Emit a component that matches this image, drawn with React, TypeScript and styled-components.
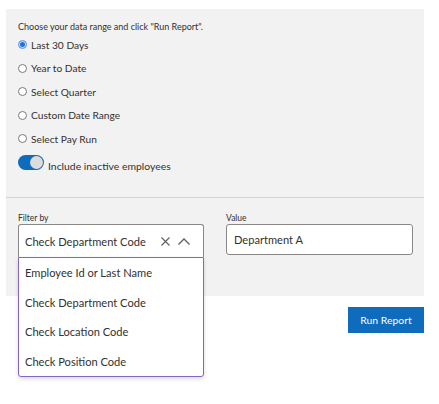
import React, { useState } from 'react';
import styled, { createGlobalStyle } from 'styled-components';

const GlobalStyle = createGlobalStyle`
  body {
    margin: 0;
    background: #ffffff;
    font-family: 'Lato', 'Liberation Sans', sans-serif;
    color: #323130;
  }
`;

const Page = styled.div`
  width: 439px;
  min-height: 404px;
  padding: 9px 15px 0 6px;
  box-sizing: border-box;
`;

const Panel = styled.div`
  background: #f2f2f2;
`;

const RangeSection = styled.div`
  padding: 12px 12px 23px;
  border-bottom: 1px solid #d4d4d4;
`;

const Hint = styled.p`
  margin: 0;
  font-size: 9px;
  line-height: 12px;
`;

const RadioRow = styled.label`
  display: flex;
  align-items: center;
  gap: 4px;
  height: 23.5px;
  font-size: 10.2px;
  cursor: pointer;
`;

const RadioDot = styled.span<{ checked: boolean }>`
  width: 9px;
  height: 9px;
  border-radius: 50%;
  box-sizing: border-box;
  border: 1px solid ${({ checked }) => (checked ? '#7aa7ea' : '#7a7a7a')};
  background: ${({ checked }) => (checked ? '#1a73e8' : '#ffffff')};
  box-shadow: ${({ checked }) => (checked ? 'inset 0 0 0 1px #cfe0fb' : 'none')};
`;

const ToggleRow = styled.div`
  display: flex;
  align-items: center;
  gap: 4px;
  height: 23.5px;
  font-size: 10.4px;
`;

const Track = styled.span<{ on: boolean }>`
  display: flex;
  align-items: center;
  justify-content: ${({ on }) => (on ? 'flex-end' : 'flex-start')};
  width: 26px;
  height: 15px;
  padding: 0 1px;
  box-sizing: border-box;
  border-radius: 8px;
  background: ${({ on }) => (on ? '#0f6cbd' : '#8a8886')};
`;

const Thumb = styled.span`
  width: 13px;
  height: 13px;
  border-radius: 50%;
  background: #dcdcdc;
`;

const ToggleLabel = styled.span`
  padding-top: 8px;
`;

const FilterSection = styled.div`
  display: grid;
  grid-template-columns: 186px 187px;
  column-gap: 22px;
  padding: 14px 11px 39px 12px;
`;

const Field = styled.div`
  position: relative;
  display: flex;
  flex-direction: column;
`;

const FieldLabel = styled.span`
  font-size: 8.5px;
  line-height: 12px;
  color: #323130;
`;

const SelectBox = styled.div`
  display: flex;
  align-items: center;
  height: 33px;
  padding: 0 13px 0 6px;
  box-sizing: border-box;
  background: #ffffff;
  border: 1px solid #8a8886;
  border-bottom: none;
  border-radius: 3px 3px 0 0;
  font-size: 11.1px;
`;

const SelectText = styled.span`
  flex: 1;
  white-space: nowrap;
`;

const IconButton = styled.span`
  display: flex;
  align-items: center;
  justify-content: center;
  color: #605e5c;
  margin-left: 8px;
`;

const Menu = styled.ul`
  position: absolute;
  top: 45px;
  left: 0;
  right: 0;
  margin: 0;
  padding: 0;
  list-style: none;
  background: #ffffff;
  border: 1px solid #8764c4;
  border-radius: 0 0 3px 3px;
  box-shadow: 0 2px 4px rgba(0, 0, 0, 0.14);
  z-index: 2;
`;

const MenuItem = styled.li`
  display: flex;
  align-items: center;
  height: 29.5px;
  padding: 0 6px;
  font-size: 11.1px;
`;

const TextInput = styled.div`
  display: flex;
  align-items: center;
  height: 31px;
  padding: 0 7px;
  box-sizing: border-box;
  background: #ffffff;
  border: 1px solid #8a8886;
  border-radius: 3px;
  font-size: 11.1px;
`;

const Footer = styled.div`
  display: flex;
  justify-content: flex-end;
  padding-top: 11px;
`;

const RunButton = styled.button`
  width: 76px;
  height: 26px;
  border: none;
  background: #0f6cbd;
  color: #ffffff;
  font-family: inherit;
  font-size: 10.4px;
  cursor: pointer;
`;

const ranges = ['Last 30 Days', 'Year to Date', 'Select Quarter', 'Custom Date Range', 'Select Pay Run'];
const filters = ['Employee Id or Last Name', 'Check Department Code', 'Check Location Code', 'Check Position Code'];

export default function App() {
  const [range, setRange] = useState(ranges[0]);
  const [inactive, setInactive] = useState(true);

  return (
    <Page>
      <GlobalStyle />
      <Panel>
        <RangeSection>
          <Hint>Choose your data range and click "Run Report".</Hint>
          {ranges.map((r) => (
            <RadioRow key={r} onClick={() => setRange(r)}>
              <RadioDot checked={range === r} />
              {r}
            </RadioRow>
          ))}
          <ToggleRow onClick={() => setInactive(!inactive)}>
            <Track on={inactive}>
              <Thumb />
            </Track>
            <ToggleLabel>Include inactive employees</ToggleLabel>
          </ToggleRow>
        </RangeSection>

        <FilterSection>
          <Field>
            <FieldLabel>Filter by</FieldLabel>
            <SelectBox>
              <SelectText>Check Department Code</SelectText>
              <IconButton>
                <svg width="9" height="9" viewBox="0 0 9 9" fill="none" stroke="currentColor" strokeWidth="1.1">
                  <path d="M0.5 0.5 L8.5 8.5 M8.5 0.5 L0.5 8.5" />
                </svg>
              </IconButton>
              <IconButton>
                <svg width="12" height="7" viewBox="0 0 12 7" fill="none" stroke="currentColor" strokeWidth="1.3">
                  <path d="M0.5 6.5 L6 1 L11.5 6.5" />
                </svg>
              </IconButton>
            </SelectBox>
            <Menu>
              {filters.map((f) => (
                <MenuItem key={f}>{f}</MenuItem>
              ))}
            </Menu>
          </Field>
          <Field>
            <FieldLabel>Value</FieldLabel>
            <TextInput>Department A</TextInput>
          </Field>
        </FilterSection>
      </Panel>
      <Footer>
        <RunButton>Run Report</RunButton>
      </Footer>
    </Page>
  );
}
